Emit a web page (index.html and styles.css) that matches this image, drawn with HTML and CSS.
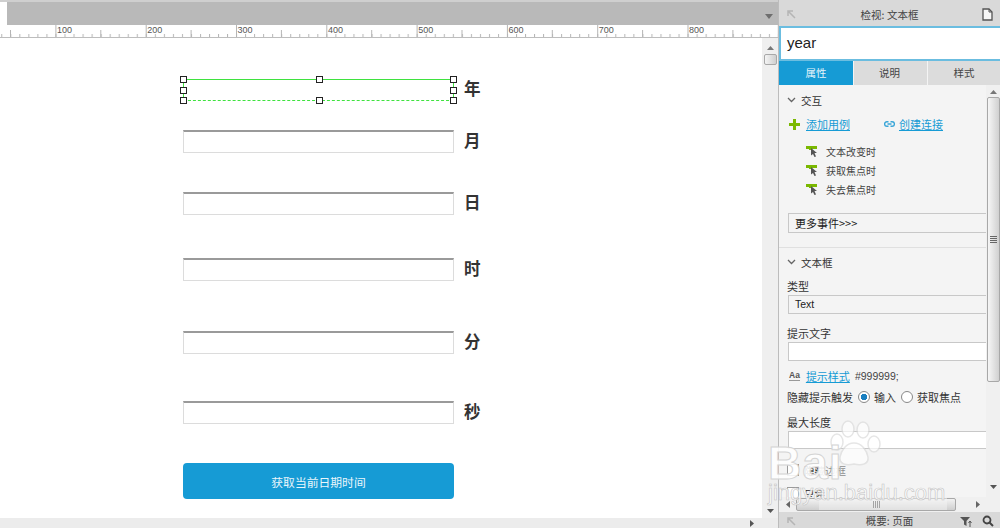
FILE: index.html
```html
<!DOCTYPE html>
<html lang="zh">
<head>
<meta charset="utf-8">
<title>文本框</title>
<link rel="stylesheet" href="styles.css">
</head>
<body>
<div class="app">
  <main class="stage">
    <div class="tabbar">
      <div class="doc-tab"></div>
      <svg class="tab-menu" width="8" height="5" viewBox="0 0 8 5"><path d="M0 0h8L4 5z" fill="#6e6e6e"/></svg>
    </div>
    <div class="ruler">
      <svg class="ruler-ticks" width="778" height="13">
        <defs>
          <pattern id="minor" x="1.3" y="0" width="9.03" height="13" patternUnits="userSpaceOnUse"><rect x="0" y="9" width="1" height="3" fill="#b5b5b5"/></pattern>
          <pattern id="mid" x="10" y="0" width="90.3" height="13" patternUnits="userSpaceOnUse"><rect x="0" y="5" width="1" height="7" fill="#b5b5b5"/></pattern>
          <pattern id="major" x="55.4" y="0" width="90.3" height="13" patternUnits="userSpaceOnUse"><rect x="0" y="0" width="1" height="12" fill="#b5b5b5"/></pattern>
        </defs>
        <rect width="778" height="13" fill="url(#minor)"/>
        <rect width="778" height="13" fill="url(#mid)"/>
        <rect width="778" height="13" fill="url(#major)"/>
      </svg>
      <div class="ruler-labels">
        <span>100</span><span>200</span><span>300</span><span>400</span><span>500</span><span>600</span><span>700</span><span>800</span>
      </div>
    </div>
    <div class="work">
      <div class="canvas">
        <div class="row row-year">
          <div class="selection">
            <i class="h h-tl"></i><i class="h h-tc"></i><i class="h h-tr"></i>
            <i class="h h-ml"></i><i class="h h-mr"></i>
            <i class="h h-bl"></i><i class="h h-bc"></i><i class="h h-br"></i>
          </div>
          <b class="unit">年</b>
        </div>
        <div class="row row-month"><div class="field"></div><b class="unit">月</b></div>
        <div class="row row-day"><div class="field"></div><b class="unit">日</b></div>
        <div class="row row-hour"><div class="field"></div><b class="unit">时</b></div>
        <div class="row row-min"><div class="field"></div><b class="unit">分</b></div>
        <div class="row row-sec"><div class="field"></div><b class="unit">秒</b></div>
        <div class="action">获取当前日期时间</div>
      </div>
      <div class="canvas-scroll">
        <svg width="7" height="4" viewBox="0 0 7 4"><path d="M0 4h7L3.500 0z" fill="#777"/></svg>
        <div class="canvas-thumb"></div>
        <svg class="canvas-down" width="7" height="4" viewBox="0 0 7 4"><path d="M0 0h7L3.500 4z" fill="#555"/></svg>
      </div>
    </div>
    <div class="canvas-hscroll">
      <svg width="4" height="7" viewBox="0 0 4 7"><path d="M0 0v7l4-3.500z" fill="#555"/></svg>
    </div>
  </main>

  <aside class="panel">
    <header class="panel-head">
      <svg class="collapse" width="9" height="9" viewBox="0 0 9 9"><path d="M1 6V1h5M1.500 1.500L8 8" fill="none" stroke="#b5b5b5" stroke-width="1.500"/></svg>
      <span>检视: 文本框</span>
      <svg class="page" width="11" height="13" viewBox="0 0 11 13"><path d="M1 1h6l3 3v8H1z" fill="#f7f7f7" stroke="#555" stroke-width="1.300"/><path d="M7 1v3h3" fill="none" stroke="#555"/></svg>
    </header>
    <div class="name-input">year</div>
    <nav class="tabs">
      <span class="tab tab-on">属性</span>
      <span class="tab tab-mid">说明</span>
      <span class="tab">样式</span>
    </nav>
    <div class="body">
      <div class="content">
        <div class="heading heading-first">
          <svg width="9" height="6" viewBox="0 0 9 6"><path d="M1 1l3.500 3.500L8 1" fill="none" stroke="#666" stroke-width="1.300"/></svg>
          <span>交互</span>
        </div>
        <div class="links">
          <svg width="11" height="11" viewBox="0 0 11 11"><path d="M4 0h3v4h4v3H7v4H4V7H0V4h4z" fill="#7ab800"/></svg>
          <a class="link link-add">添加用例</a>
          <svg width="11" height="6" viewBox="0 0 11 6"><path d="M4.500 0.800H2.800a2.200 2.200 0 0 0 0 4.400h1.700M6.500 0.800h1.700a2.200 2.200 0 0 1 0 4.400H6.500M3.500 3h4" fill="none" stroke="#3aa6d8" stroke-width="1.400"/></svg>
          <a class="link link-create">创建连接</a>
        </div>
        <ul class="events">
          <li><svg width="12" height="13" viewBox="0 0 12 13"><path d="M0 1h11v3H6v1H3V4H0z" fill="#7ab800"/><path d="M5 3l6 5H8.500l1.500 3.500-1.500.5L7 9 5 10.500z" fill="#555"/></svg>文本改变时</li>
          <li><svg width="12" height="13" viewBox="0 0 12 13"><path d="M0 1h11v3H6v1H3V4H0z" fill="#7ab800"/><path d="M5 3l6 5H8.500l1.500 3.500-1.500.5L7 9 5 10.500z" fill="#555"/></svg>获取焦点时</li>
          <li><svg width="12" height="13" viewBox="0 0 12 13"><path d="M0 1h11v3H6v1H3V4H0z" fill="#7ab800"/><path d="M5 3l6 5H8.500l1.500 3.500-1.500.5L7 9 5 10.500z" fill="#555"/></svg>失去焦点时</li>
        </ul>
        <div class="box box-more">更多事件&gt;&gt;&gt;</div>
        <div class="divider"></div>
        <div class="heading heading-box">
          <svg width="9" height="6" viewBox="0 0 9 6"><path d="M1 1l3.500 3.500L8 1" fill="none" stroke="#666" stroke-width="1.300"/></svg>
          <span>文本框</span>
        </div>
        <div class="label label-type">类型</div>
        <div class="box box-select">Text</div>
        <div class="label label-next">提示文字</div>
        <div class="box box-white"></div>
        <div class="hint">
          <span class="aa">Aa</span>
          <a class="link">提示样式</a>
          <span class="hint-value">#999999;</span>
        </div>
        <div class="radios">
          <span>隐藏提示触发</span>
          <i class="radio radio-on"></i><span>输入</span>
          <i class="radio"></i><span>获取焦点</span>
        </div>
        <div class="label label-max">最大长度</div>
        <div class="box box-white box-max"></div>
        <div class="check check-first"><i></i><span>隐藏边框</span></div>
        <div class="check check-second"><i></i><span>只读</span></div>
      </div>
      <div class="vscroll">
        <svg width="7" height="4" viewBox="0 0 7 4"><path d="M0 4h7L3.500 0z" fill="#777"/></svg>
        <div class="vthumb"><span></span></div>
        <svg class="vdown" width="7" height="4" viewBox="0 0 7 4"><path d="M0 0h7L3.500 4z" fill="#555"/></svg>
      </div>
    </div>
    <div class="hscroll">
      <svg width="4" height="7" viewBox="0 0 4 7"><path d="M4 0v7L0 3.500z" fill="#666"/></svg>
      <div class="hthumb"><span></span></div>
      <svg width="4" height="7" viewBox="0 0 4 7"><path d="M0 0v7l4-3.500z" fill="#666"/></svg>
    </div>
    <footer class="panel-foot">
      <svg class="collapse" width="9" height="9" viewBox="0 0 9 9"><path d="M1 6V1h5M1.500 1.500L8 8" fill="none" stroke="#b5b5b5" stroke-width="1.500"/></svg>
      <span>概要: 页面</span>
      <svg class="filter" width="13" height="11" viewBox="0 0 13 11"><path d="M0 1h10L6.500 5v5L4 8.500V5z" fill="#555"/><path d="M10 5v6M8.500 7L10 5l1.500 2" fill="none" stroke="#555"/></svg>
      <svg class="search" width="12" height="12" viewBox="0 0 12 12"><circle cx="5" cy="5" r="3.500" fill="none" stroke="#444" stroke-width="1.800"/><path d="M7.500 7.500L11 11" stroke="#444" stroke-width="2"/></svg>
    </footer>
  </aside>

  <div class="watermark">
    <div class="wm-haze"></div>
    <svg class="wm-paw" width="58" height="50" viewBox="0 0 58 50">
      <g fill="#fff" stroke="#dcdcdc" stroke-width="1.500">
        <ellipse cx="12" cy="22" rx="6" ry="8"/>
        <ellipse cx="23" cy="9" rx="6" ry="8"/>
        <ellipse cx="38" cy="10" rx="6" ry="8"/>
        <ellipse cx="49" cy="24" rx="6" ry="8"/>
        <path d="M29 23c8 0 13 8 14 14 1 7-6 9-14 7-8 2-15 0-14-7 1-6 6-14 14-14z"/>
      </g>
    </svg>
    <span class="wm-bai">Bai</span>
    <span class="wm-url">jingyan.baidu.com</span>
  </div>
</div>
</body>
</html>
```

FILE: styles.css
```css
* { box-sizing: border-box; }

html, body {
  margin: 0;
  height: 100%;
  overflow: hidden;
}

body {
  font-family: "Noto Sans CJK SC", "Liberation Sans", sans-serif;
  font-size: 11px;
  color: #333;
  background: #fff;
}

.app {
  position: relative;
  display: flex;
  width: 1000px;
  height: 528px;
  overflow: hidden;
}

/* left: editor */
.stage {
  display: flex;
  flex-direction: column;
  width: 778px;
  flex: none;
}

.tabbar {
  display: flex;
  align-items: center;
  justify-content: space-between;
  height: 25px;
  flex: none;
  padding-right: 5px;
  background: #b9b9b9;
  border-top: 2px solid #cfcfcf;
}

.doc-tab {
  align-self: flex-start;
  width: 7px;
  height: 23px;
  background: #fff;
}

.tab-menu { margin-top: 6px; }

.ruler {
  position: relative;
  height: 13px;
  flex: none;
  background: #fff;
  border-bottom: 1px solid #bdbdbd;
}

.ruler-ticks {
  position: absolute;
  left: 0;
  top: 0;
}

.ruler-labels {
  display: flex;
  padding-left: 57px;
  font: 9px/11px "Liberation Sans", sans-serif;
  color: #555;
}

.ruler-labels span { width: 90.3px; flex: none; }

.work {
  display: flex;
  flex: 1;
  min-height: 0;
}

.canvas {
  position: relative;
  flex: 1;
  background: #fff;
}

.row {
  position: absolute;
  left: 183px;
  display: flex;
  align-items: center;
  gap: 10px;
}

.row-year { top: 41px; }
.row-month { top: 92px; }
.row-day { top: 154px; }
.row-hour { top: 220px; }
.row-min { top: 293px; }
.row-sec { top: 363px; }

.field {
  width: 271px;
  height: 23px;
  background: #fff;
  border: 1px solid #dcdcdc;
  border-top: 2px solid #9a9a9a;
}

.unit {
  margin-bottom: 4px;
  font-size: 16.500px;
  line-height: 16px;
  color: #333;
}

.selection {
  position: relative;
  width: 271px;
  height: 22px;
  border: 1px solid #3fe23f;
  border-bottom-style: dashed;
}

.h {
  position: absolute;
  width: 7px;
  height: 7px;
  background: #fff;
  border: 1px solid #222;
}

.h-tl, .h-ml, .h-bl { left: -4px; }
.h-tc, .h-bc { left: 132px; }
.h-tr, .h-mr, .h-br { right: -4px; }
.h-tl, .h-tc, .h-tr { top: -4px; }
.h-ml, .h-mr { top: 7px; }
.h-bl, .h-bc, .h-br { bottom: -4px; }

.action {
  position: absolute;
  left: 183px;
  top: 425px;
  display: flex;
  align-items: center;
  justify-content: center;
  width: 271px;
  height: 36px;
  border-radius: 4px;
  background: #169bd5;
  color: #eaf6fb;
  font-size: 11.800px;
}

.canvas-scroll {
  display: flex;
  flex-direction: column;
  align-items: center;
  width: 16px;
  flex: none;
  padding-top: 8px;
  background: #efefef;
}

.canvas-thumb {
  width: 13px;
  height: 11px;
  margin-top: 4px;
  border: 1px solid #a8a8a8;
  border-radius: 2px;
  background: linear-gradient(90deg, #f4f4f4, #cfcfcf);
}

.canvas-down { margin-top: auto; margin-bottom: 5px; }

.canvas-hscroll {
  display: flex;
  align-items: center;
  justify-content: flex-end;
  height: 10px;
  flex: none;
  padding-right: 24px;
  background: #ececec;
}

/* right: inspector */
.panel {
  display: flex;
  flex-direction: column;
  width: 222px;
  flex: none;
  background: #f4f4f4;
  border-left: 1px solid #bcbcbc;
}

.panel-head {
  position: relative;
  display: flex;
  align-items: center;
  justify-content: center;
  height: 26px;
  flex: none;
  padding-top: 3px;
  background: #d9d9d9;
  color: #444;
  font-size: 10.500px;
}

.collapse {
  position: absolute;
  left: 8px;
  top: 10px;
}

.page {
  position: absolute;
  right: 7px;
  top: 8px;
}

.name-input {
  height: 35px;
  flex: none;
  padding-left: 6px;
  background: #fff;
  border: 2px solid #6bbde0;
  border-right: 0;
  font: 15px/30px "Liberation Sans", sans-serif;
  color: #222;
}

.tabs {
  display: flex;
  gap: 1px;
  height: 24px;
  flex: none;
  background: #f4f4f4;
}

.tab {
  flex: 1;
  text-align: center;
  line-height: 24px;
  font-size: 10.500px;
  background: #dcdcdc;
  color: #444;
}

.tab-on {
  flex: none;
  width: 74px;
  background: #169bd5;
  color: #e6f5fb;
}

.tab-mid {
  flex: none;
  width: 73px;
  padding-right: 2px;
}

.body {
  display: flex;
  flex: 1;
  min-height: 0;
}

.content {
  flex: 1;
  min-width: 0;
  overflow: hidden;
  padding-left: 8px;
}

.heading {
  display: flex;
  align-items: center;
  gap: 5px;
  height: 16px;
  font-size: 10.500px;
}

.heading-first { margin-top: 7px; }
.heading-box { margin-top: 6px; }

.links {
  display: flex;
  align-items: center;
  height: 16px;
  margin-top: 8px;
  padding-left: 2px;
}

.link {
  color: #169bd5;
  text-decoration: underline;
  font-size: 11px;
}

.links .link { margin-left: 6px; }
.links .link-add { margin-right: 34px; }
.links .link-create { margin-left: 4px; }

.events {
  list-style: none;
  margin: 10px 0 0;
  padding: 0 0 0 19px;
  font-size: 10px;
  color: #444;
}

.events li {
  display: flex;
  align-items: center;
  gap: 8px;
  height: 19px;
}

.box {
  height: 19px;
  margin-left: 1px;
  padding-left: 6px;
  background: #f4f4f4;
  border: 1px solid #c8c8c8;
  border-width: 1px 0 1px 1px;
  line-height: 17px;
  font-size: 11px;
  color: #222;
}

.box-more {
  height: 20px;
  margin-top: 14px;
  line-height: 18px;
}

.box-select {
  margin-top: 2px;
  font-family: "Liberation Sans", sans-serif;
  font-size: 10.500px;
}

.box-white {
  margin-top: 2px;
  background: #fff;
}

.box-max { height: 18px; }

.divider {
  height: 1px;
  margin: 14px 0 0 -8px;
  background: #e0e0e0;
}

.label {
  height: 14px;
  line-height: 14px;
  font-size: 11px;
}

.label-type { margin-top: 9px; }
.label-next { margin-top: 12px; }
.label-max { margin-top: 10px; }

.hint {
  display: flex;
  align-items: center;
  height: 16px;
  margin-top: 7px;
  padding-left: 2px;
}

.aa {
  font: bold 8.500px "Liberation Sans", sans-serif;
  color: #555;
  border-bottom: 1px solid #999;
  line-height: 9px;
  margin-right: 6px;
}

.hint-value {
  margin-left: 5px;
  font: 10.500px "Liberation Sans", sans-serif;
  color: #444;
}

.radios {
  display: flex;
  align-items: center;
  height: 16px;
  margin-top: 5px;
  font-size: 11px;
  white-space: nowrap;
}

.radio {
  width: 12px;
  height: 12px;
  flex: none;
  margin: 0 4px 0 5px;
  border: 1px solid #888;
  border-radius: 50%;
  background: #fff;
}

.radio-on {
  background: radial-gradient(circle, #1a7fc0 0 3px, #fff 3.500px);
}

.check {
  display: flex;
  align-items: center;
  gap: 5px;
  height: 16px;
  font-size: 10.500px;
  color: #222;
}

.check i {
  width: 12px;
  height: 12px;
  border: 1px solid #9a9a9a;
  background: #fff;
}

.check-first { margin-top: 13px; }
.check-second { margin-top: 7px; }

.vscroll {
  display: flex;
  flex-direction: column;
  align-items: center;
  width: 14px;
  flex: none;
  padding-top: 5px;
  background: #f0f0f0;
}

.vthumb {
  display: flex;
  align-items: center;
  justify-content: center;
  width: 13px;
  height: 285px;
  margin-top: 3px;
  border: 1px solid #a8a8a8;
  border-radius: 2px;
  background: linear-gradient(90deg, #f6f6f6, #d0d0d0);
}

.vthumb span {
  width: 7px;
  height: 7px;
  background: repeating-linear-gradient(0deg, #666 0 1px, transparent 1px 2px);
}

.vdown { margin-top: auto; margin-bottom: 8px; }

.hscroll {
  display: flex;
  align-items: center;
  justify-content: space-between;
  height: 15px;
  flex: none;
  padding: 0 20px 0 7px;
  background: #f0f0f0;
}

.hthumb {
  display: flex;
  align-items: center;
  justify-content: center;
  width: 160px;
  height: 13px;
  margin-left: 4px;
  margin-right: 18px;
  border: 1px solid #a8a8a8;
  border-radius: 2px;
  background: linear-gradient(180deg, #f2f2f2, #cfcfcf);
}

.hthumb span {
  width: 7px;
  height: 7px;
  background: repeating-linear-gradient(90deg, #555 0 1px, transparent 1px 2px);
}

.panel-foot {
  position: relative;
  display: flex;
  align-items: center;
  justify-content: center;
  height: 16px;
  flex: none;
  padding-top: 1px;
  background: #d9d9d9;
  color: #444;
  font-size: 10.500px;
}

.panel-foot .collapse { top: 5px; }

.filter {
  position: absolute;
  right: 27px;
  top: 4px;
}

.search {
  position: absolute;
  right: 6px;
  top: 3px;
}

/* watermark over everything */
.watermark {
  position: absolute;
  left: 765px;
  top: 418px;
  width: 200px;
  height: 100px;
  pointer-events: none;
}

.wm-haze {
  position: absolute;
  left: 54px;
  top: 32px;
  width: 128px;
  height: 60px;
  background: rgba(244, 244, 244, 0.5);
}

.wm-paw {
  position: absolute;
  left: 60px;
  top: 2px;
  opacity: 0.7;
}

.wm-bai {
  position: absolute;
  left: 3px;
  top: 17px;
  font: bold 46px/56px "Liberation Sans", sans-serif;
  color: rgba(255, 255, 255, 0.9);
  -webkit-text-stroke: 1px #d4d4d4;
  letter-spacing: 1px;
}

.wm-url {
  position: absolute;
  left: 3px;
  top: 62px;
  font: 22px/26px "Liberation Sans", sans-serif;
  color: rgba(255, 255, 255, 0.85);
  -webkit-text-stroke: 0.600px #c4c4c4;
  white-space: nowrap;
}
```
